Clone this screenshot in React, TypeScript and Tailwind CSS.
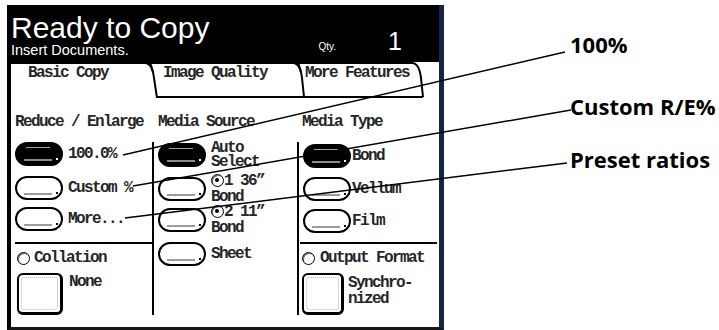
const mono =
  "font-['Liberation_Mono','DejaVu_Sans_Mono',monospace] text-[16px] font-bold leading-[14px] tracking-[-1.6px] text-[#262626] whitespace-nowrap";

function Oval({ on = false }: { on?: boolean }) {
  return (
    <div
      className={`relative h-[24px] w-[48px] shrink-0 rounded-[12px] border-2 border-black ${
        on ? "bg-black" : "bg-white"
      }`}
    >
      {on ? <div className="absolute left-[9px] right-[11px] top-[3px] h-px bg-[#a0a0a0]" /> : null}
      <div
        className={`absolute bottom-[3px] left-[7px] right-[9px] h-[2px] ${on ? "bg-[#8c8c8c]" : "bg-[#9c9c9c]"}`}
      />
      <div className={`absolute bottom-[4px] right-[3px] h-[2px] w-[2px] ${on ? "bg-white" : "bg-black"}`} />
    </div>
  );
}

function Radio({ dot = false }: { dot?: boolean }) {
  return (
    <span className="relative inline-block h-[13px] w-[13px] shrink-0 rounded-full border-[1.5px] border-black bg-white shadow-[inset_1px_1px_0_#666]">
      {dot ? (
        <span className="absolute left-[3px] top-[3px] h-[4px] w-[4px] rounded-full bg-black" />
      ) : null}
    </span>
  );
}

function SquareButton({ w }: { w: string }) {
  return (
    <div className={`${w} relative h-[42px] shrink-0 rounded-[6px] border-2 border-b-[3px] border-r-[3px] border-black bg-white`}>
      <div className="absolute inset-[2px] rounded-[3px] border border-dotted border-[#b5b5b5]" />
    </div>
  );
}

function Tabs() {
  return (
    <div className="relative flex h-[36px] bg-white pt-[4px]">
      <svg className="absolute inset-0" width="428" height="36" viewBox="0 0 428 36" fill="none">
        <path d="M134 0 L139 0 L142.5 10 C141 5 139 1.5 134 1 Z" fill="#000" />
        <path d="M282 0 L287 0 L290.5 10 C289 5 287 1.5 282 1 Z" fill="#000" />
        <g stroke="#000" strokeWidth="2">
          <path d="M0 1 H134 C140 1 142 8 143 16 L146 36" />
          <path d="M139 0 L142 10" />
          <path d="M139 1 H282 C288 1 290 8 291 16 L293 35" />
          <path d="M287 0 L290 10" />
          <path d="M287 1 H401 C407 1 409 8 410 16 L412 35" />
          <path d="M145 35 H412" />
        </g>
      </svg>
      <span className={`${mono} relative ml-[17px]`}>Basic Copy</span>
      <span className={`${mono} relative ml-[55px]`}>Image Quality</span>
      <span className={`${mono} relative ml-[38px]`}>More Features</span>
    </div>
  );
}

function Screen() {
  return (
    <div className="mt-[5px] ml-[7px] flex h-[325px] w-[437px] shrink-0 flex-col border-l-4 border-r-[5px] border-b-[3px] border-l-black border-r-[#14254a] border-b-[#161616] bg-black">
      <div className="flex h-[57px] justify-between bg-black pt-[8px] text-white font-['Liberation_Sans',Arial,sans-serif]">
        <div className="flex flex-col">
          <p className="text-[30px] leading-none">Ready to Copy</p>
          <p className="text-[14.5px] leading-none">Insert Documents.</p>
        </div>
        <div className="mt-[16px] mr-[37px] flex items-baseline gap-[52px]">
          <span className="text-[10px] leading-none">Qty.</span>
          <span className="text-[25px] leading-none">1</span>
        </div>
      </div>
      <Tabs />
      <div className="grid flex-1 grid-cols-[141px_145px_1fr] bg-white pb-[12px]">
        <div className="flex flex-col">
          <div className={`${mono} h-[44px] pl-[4px] pt-[17px]`}>Reduce / Enlarge</div>
          <div className="flex flex-1 flex-col pl-[4px]">
            <div className="flex h-[24px] items-center">
              <Oval on />
              <span className={`${mono} ml-[5px]`}>100.0%</span>
            </div>
            <div className="mt-[10px] flex h-[24px] items-center">
              <Oval />
              <span className={`${mono} ml-[5px]`}>Custom %</span>
            </div>
            <div className="mt-[7px] flex h-[24px] items-center">
              <Oval />
              <span className={`${mono} ml-[5px]`}>More...</span>
            </div>
            <div className="mt-[11px] h-[2px] bg-black" />
            <div className="mt-[7px] flex h-[14px] items-center pl-[2px]">
              <Radio />
              <span className={`${mono} ml-[4px]`}>Collation</span>
            </div>
            <div className="mt-[8px] flex pl-[2px]">
              <SquareButton w="w-[46px]" />
              <span className={`${mono} ml-[6px] mt-[2px]`}>None</span>
            </div>
          </div>
        </div>
        <div className="flex flex-col">
          <div className={`${mono} h-[44px] pl-[6px] pt-[17px]`}>Media Source</div>
          <div className="flex flex-1 flex-col border-l-2 border-black pl-[4px]">
            <div className="mt-[1px] flex h-[24px] items-center">
              <Oval on />
              <span className={`${mono} ml-[5px]`}>
                Auto
                <br />
                Select
              </span>
            </div>
            <div className="mt-[10px] flex h-[24px] items-center">
              <Oval />
              <span className={`${mono} ml-[5px]`}>
                <span className="inline-flex items-center">
                  <Radio dot />
                  <span>1 36”</span>
                </span>
                <br />
                Bond
              </span>
            </div>
            <div className="mt-[7px] flex h-[24px] items-center">
              <Oval />
              <span className={`${mono} ml-[5px]`}>
                <span className="inline-flex items-center">
                  <Radio dot />
                  <span>2 11”</span>
                </span>
                <br />
                Bond
              </span>
            </div>
            <div className="mt-[10px] flex h-[24px] items-center">
              <Oval />
              <span className={`${mono} ml-[5px]`}>Sheet</span>
            </div>
          </div>
        </div>
        <div className="flex flex-col">
          <div className={`${mono} h-[44px] pl-[5px] pt-[17px]`}>Media Type</div>
          <div className="flex flex-1 flex-col border-l-2 border-black pl-[4px]">
            <div className="mt-[2px] flex h-[24px] items-center">
              <Oval on />
              <span className={`${mono} ml-[1px]`}>Bond</span>
            </div>
            <div className="mt-[9px] flex h-[24px] items-center">
              <Oval />
              <span className={`${mono} ml-[1px]`}>Vellum</span>
            </div>
            <div className="mt-[8px] flex h-[24px] items-center">
              <Oval />
              <span className={`${mono} ml-[1px]`}>Film</span>
            </div>
            <div className="mt-[9px] -ml-[3px] mr-[2px] h-[2px] bg-black" />
            <div className="mt-[7px] -ml-[1px] flex h-[14px] items-center">
              <Radio />
              <span className={`${mono} ml-[5px]`}>Output Format</span>
            </div>
            <div className="mt-[8px] -ml-[1px] flex">
              <SquareButton w="w-[42px]" />
              <span className={`${mono} ml-[4px] mt-[2px] leading-[16px]`}>
                Synchro-
                <br />
                nized
              </span>
            </div>
          </div>
        </div>
      </div>
    </div>
  );
}

export default function App() {
  return (
    <div className="relative flex h-[330px] w-[719px] items-start overflow-hidden bg-white">
      <Screen />
      <div className="ml-[126px] mt-[29px] flex flex-col font-['Open_Sans','Noto_Sans',sans-serif] text-[22px] font-bold leading-[30px] text-black whitespace-nowrap">
        <p>100%</p>
        <p className="mt-[32px]">Custom R/E%</p>
        <p className="mt-[23px]">Preset ratios</p>
      </div>
      <svg className="pointer-events-none absolute inset-0" width="719" height="330" viewBox="0 0 719 330">
        <g stroke="#000" strokeWidth="1.5">
          <line x1="123" y1="155" x2="565" y2="52" />
          <line x1="133" y1="186" x2="571" y2="110" />
          <line x1="125" y1="218" x2="567" y2="163" />
        </g>
      </svg>
    </div>
  );
}
